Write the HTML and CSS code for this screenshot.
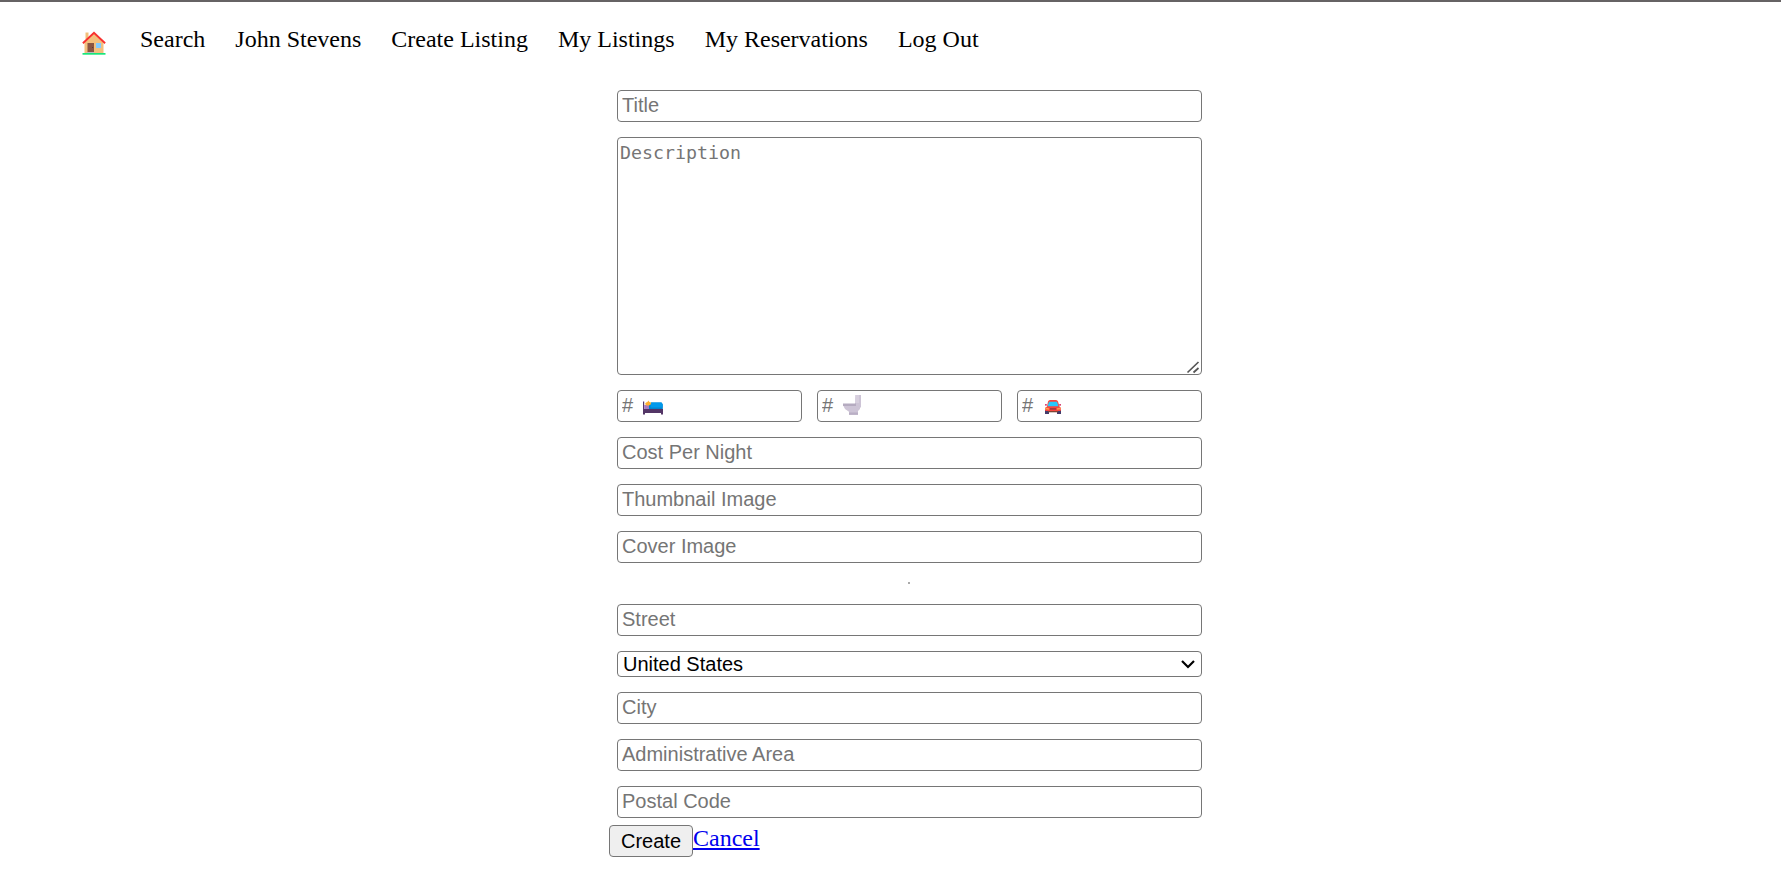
FILE: index.html
```html
<!DOCTYPE html>
<html lang="en">
<head>
<meta charset="utf-8">
<title>Create Listing</title>
<link rel="stylesheet" href="styles.css">
</head>
<body>
<nav class="nav">
  <a class="home" href="#" aria-label="Home">
    <svg width="24" height="24" viewBox="0 0 24 24">
      <path d="M3.500 1.500h3V8h-3z" fill="#f2c07c"/>
      <path d="M2.500 11.500L12 2l9.500 9.500V22h-19z" fill="#f3c07d"/>
      <path d="M.9 12.300L12 1.800l11.100 10.500" fill="none" stroke="#f8312f" stroke-width="1.900"/>
      <path d="M5.500 12h6.500v9H5.500z" fill="#8b5543"/>
      <circle cx="10.600" cy="16.500" r=".6" fill="#5c3529"/>
      <path d="M14 12h5v5h-5z" fill="#83cbff"/>
      <path d="M5 21h7v1.200H5z" fill="#b8b8c0"/>
      <path d="M.5 22h23v1.700H.5z" fill="#18e67b"/>
    </svg>
  </a>
  <a href="#">Search</a>
  <a href="#">John Stevens</a>
  <a href="#">Create Listing</a>
  <a href="#">My Listings</a>
  <a href="#">My Reservations</a>
  <a href="#">Log Out</a>
</nav>
<form class="form">
  <input class="control" type="text" placeholder="Title">
  <div class="area">
    <textarea class="control description" placeholder="Description"></textarea>
    <svg class="grip" width="14" height="14" viewBox="0 0 14 14"><path d="M1.500 12.500L12.500 2M7.500 12.500L12.500 8" fill="none" stroke="#555" stroke-width="1.700"/></svg>
  </div>
  <div class="counts">
    <div class="count">
      <input class="control" type="text" placeholder="#">
      <svg class="icon bed" width="22" height="16" viewBox="0 0 22 16">
        <path d="M1 1.500h1.200V14H1z" fill="#533566"/>
        <path d="M2.200 5H8v4.500H2.200z" fill="#a77bc0"/>
        <path d="M7 4.500l2-2h10.500l1.300 2V9.500H7z" fill="#0084ce"/>
        <path d="M9 2.500h10.500l1 1.500v3.500H8.500V4z" fill="#0099eb"/>
        <path d="M1 9h20v5.500h-2V13H3v1.500H1z" fill="#533566"/>
        <path d="M3 4l1-1.500L5.500 2l.7-1.500L7.500 2l1.800.7-.6 1.800L7 5.500H4.500z" fill="#ffb02e"/>
      </svg>
    </div>
    <div class="count">
      <input class="control" type="text" placeholder="#">
      <svg class="icon toilet" width="20" height="22" viewBox="0 0 20 22">
        <path d="M13.500 1H19v12.500h-6V8.500z" fill="#cdc4d6"/>
        <path d="M13.500 1H17v8h-4z" fill="#d7cfde"/>
        <path d="M1 9.500h13V12H1z" fill="#b5abc0"/>
        <path d="M1.500 12H18v3l-2 2v3.800H7v-3L3 15z" fill="#cdc4d6"/>
        <path d="M7 18.500h9v2.300H7z" fill="#b9afc5"/>
      </svg>
    </div>
    <div class="count">
      <input class="control" type="text" placeholder="#">
      <svg class="icon car" width="18" height="16" viewBox="0 0 18 16">
        <path d="M1 11h4v4H1zM13 11h4v4h-4z" fill="#433b6b"/>
        <path d="M4 2.500Q4.500 1 6 1h6q1.500 0 2 1.500l1.500 5 1.300 1.300V12H1.200V8.800L3 7.500z" fill="#f8463f"/>
        <path d="M5 2.800h8l1.500 4.500h-11z" fill="#26c9fc"/>
        <path d="M1.500 8.500l3.500.8v1.500l-3.500-.5zM16.500 8.500l-3.500.8v1.500l3.500-.5z" fill="#ffa044"/>
        <path d="M6 9h6v1.800H6z" fill="#a93b3f"/>
        <path d="M4 12h10v1.300H4z" fill="#7d4533"/>
        <path d="M1 5.300h1.800v1.300H1zM15.200 5.300H17v1.300h-1.800z" fill="#ca0b4a"/>
      </svg>
    </div>
  </div>
  <input class="control" type="text" placeholder="Cost Per Night">
  <input class="control" type="text" placeholder="Thumbnail Image">
  <input class="control" type="text" placeholder="Cover Image">
  <hr class="divider">
  <input class="control" type="text" placeholder="Street">
  <div class="country">
    <select class="control select"><option>United States</option></select>
    <svg class="chevron" width="16" height="10" viewBox="0 0 16 10"><path d="M2 2l6 6 6-6" fill="none" stroke="#000" stroke-width="2.200"/></svg>
  </div>
  <input class="control" type="text" placeholder="City">
  <input class="control" type="text" placeholder="Administrative Area">
  <input class="control" type="text" placeholder="Postal Code">
  <div class="actions">
    <button class="create" type="button">Create</button><a class="cancel" href="#">Cancel</a>
  </div>
</form>
</body>
</html>
```
FILE: styles.css
```css
* {
  box-sizing: border-box;
}

body {
  margin: 0;
  min-height: 892px;
  border-top: 2px solid #666364;
  background: #fff;
  color: #000;
  font: 24px/28px "Liberation Serif", serif;
}

.nav {
  display: flex;
  gap: 30px;
  height: 88px;
  padding: 23px 0 0 82px;
}

.nav a {
  color: #000;
  text-decoration: none;
  white-space: nowrap;
}

.nav .home {
  width: 28px;
  padding-top: 6px;
}

.home svg,
.icon,
.grip,
.chevron {
  display: block;
}

.form {
  display: flex;
  flex-direction: column;
  gap: 15px;
  width: 585px;
  margin-left: 617px;
}

.control {
  display: block;
  width: 100%;
  height: 32px;
  margin: 0;
  padding: 0 4px 2px;
  border: 1px solid #767676;
  border-radius: 4px;
  outline: none;
  background: #fff;
  color: #000;
  font: 20px "Liberation Sans", sans-serif;
}

.control::placeholder {
  color: #757575;
  opacity: 1;
}

.area,
.count,
.country {
  position: relative;
}

.description {
  height: 238px;
  padding: 3px 2px;
  resize: none;
  font: 18.27px/24px "DejaVu Sans Mono", monospace;
}

.grip {
  position: absolute;
  right: 2px;
  bottom: 1px;
}

.counts {
  display: grid;
  grid-template-columns: repeat(3, 1fr);
  gap: 15px;
}

.icon {
  position: absolute;
}

.bed {
  left: 25px;
  top: 10px;
}

.toilet {
  left: 25px;
  top: 4px;
}

.car {
  left: 27px;
  top: 9px;
}

.divider {
  width: 2px;
  height: 2px;
  margin: 4px 292px 5px 291px;
  border: 0;
  background: #aaa;
}

.select {
  height: 26px;
  padding: 0 5px 1px;
  appearance: none;
}

.chevron {
  position: absolute;
  right: 6px;
  top: 8px;
}

.actions {
  display: flex;
  margin: -8px 0 0 -8px;
}

.create {
  width: 84px;
  height: 32px;
  padding: 0;
  border: 1px solid #767676;
  border-radius: 4px;
  background: #efefef;
  color: #000;
  font: 20px "Liberation Sans", sans-serif;
}

.cancel {
  margin-top: -1px;
  color: #00e;
}
```
